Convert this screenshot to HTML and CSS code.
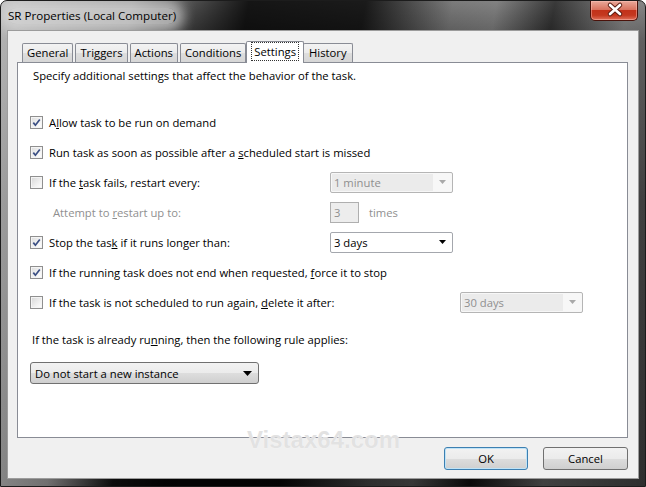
FILE: index.html
```html
<!DOCTYPE html>
<html>
<head>
<meta charset="utf-8">
<title>SR Properties (Local Computer)</title>
<link rel="stylesheet" href="styles.css">
</head>
<body>
<div class="window">
  <div class="titlebar">
    <span class="title">SR Properties (Local Computer)</span>
    <div class="close-btn">
      <svg width="48" height="20" viewBox="0 0 48 20">
        <path d="M19 5 L29 14 M29 5 L19 14" stroke="#5b1c12" stroke-width="4.5" stroke-linecap="round"/>
        <path d="M19 5 L29 14 M29 5 L19 14" stroke="#ffffff" stroke-width="2.6" stroke-linecap="round"/>
      </svg>
    </div>
  </div>
  <div class="client">
    <div class="tabs">
      <div class="tab">General</div>
      <div class="tab">Triggers</div>
      <div class="tab">Actions</div>
      <div class="tab">Conditions</div>
      <div class="tab active"><span class="focus">Settings</span></div>
      <div class="tab last">History</div>
    </div>
    <div class="panel">
      <p class="intro">Specify additional settings that affect the behavior of the task.</p>
      <div class="options">
        <div class="row">
          <label class="opt"><span class="cb checked"><svg width="11" height="11" viewBox="0 0 11 11"><path d="M2.3 5.6 L4.4 8.2 L8.8 2.4" fill="none" stroke="#3b4f84" stroke-width="1.7"/></svg></span><span>A<u>l</u>low task to be run on demand</span></label>
        </div>
        <div class="row">
          <label class="opt"><span class="cb checked"><svg width="11" height="11" viewBox="0 0 11 11"><path d="M2.3 5.6 L4.4 8.2 L8.8 2.4" fill="none" stroke="#3b4f84" stroke-width="1.7"/></svg></span><span>Run task as soon as possible after a <u>s</u>cheduled start is missed</span></label>
        </div>
        <div class="row">
          <label class="opt"><span class="cb"></span><span>If the <u>t</u>ask fails, restart every:</span></label>
          <div class="combo disabled"><span class="combo-text">1 minute</span><span class="combo-arrow"><svg width="7" height="4" viewBox="0 0 7 4"><path d="M0 0 H7 L3.5 4 Z" fill="#a9a9a9"/></svg></span></div>
        </div>
        <div class="row">
          <span class="opt indent gray"><span>Attempt to <u>r</u>estart up to:</span></span>
          <div class="textbox disabled">3</div>
          <span class="times gray">times</span>
        </div>
        <div class="row">
          <label class="opt"><span class="cb checked"><svg width="11" height="11" viewBox="0 0 11 11"><path d="M2.3 5.6 L4.4 8.2 L8.8 2.4" fill="none" stroke="#3b4f84" stroke-width="1.7"/></svg></span><span>Stop the tas<u>k</u> if it runs longer than:</span></label>
          <div class="combo"><span class="combo-text">3 days</span><span class="combo-arrow"><svg width="7" height="4" viewBox="0 0 7 4"><path d="M0 0 H7 L3.5 4 Z" fill="#000"/></svg></span></div>
        </div>
        <div class="row">
          <label class="opt"><span class="cb checked"><svg width="11" height="11" viewBox="0 0 11 11"><path d="M2.3 5.6 L4.4 8.2 L8.8 2.4" fill="none" stroke="#3b4f84" stroke-width="1.7"/></svg></span><span>If the running task does not end when requested, <u>f</u>orce it to stop</span></label>
        </div>
        <div class="row">
          <label class="opt wide"><span class="cb"></span><span>If the task is not scheduled to run again, <u>d</u>elete it after:</span></label>
          <div class="combo disabled"><span class="combo-text">30 days</span><span class="combo-arrow"><svg width="7" height="4" viewBox="0 0 7 4"><path d="M0 0 H7 L3.5 4 Z" fill="#a9a9a9"/></svg></span></div>
        </div>
      </div>
      <p class="rule-label">If the task is already ru<u>n</u>ning, then the following rule applies:</p>
      <div class="dropdown"><span>Do not start a new instance</span><svg width="9" height="5" viewBox="0 0 9 5"><path d="M0 0 H9 L4.5 5 Z" fill="#000"/></svg></div>
    </div>
    <div class="buttons">
      <div class="btn default">OK</div>
      <div class="btn">Cancel</div>
    </div>
    <div class="watermark">Vistax64.com</div>
  </div>
</div>
</body>
</html>
```

FILE: styles.css
```css
* { box-sizing: border-box; }
html, body { margin: 0; padding: 0; background: #ffffff; }
body {
  font-family: "Open Sans", "Noto Sans", sans-serif;
  font-size: 11.25px;
  color: #000;
}
u { text-decoration: underline; text-underline-offset: 1px; }

.window {
  width: 646px;
  height: 487px;
  display: flex;
  flex-direction: column;
  border: 1px solid #1c1c1c;
  border-radius: 7px 7px 0 0;
  overflow: hidden;
  background:
    linear-gradient(100deg, rgba(220,220,220,0.75) 0, rgba(190,190,190,0.55) 18%, rgba(0,0,0,0.3) 27%, rgba(0,0,0,0.8) 34%, rgba(0,0,0,0.75) 50%, rgba(255,255,255,0.12) 62%, rgba(255,255,255,0.16) 68%, rgba(0,0,0,0.45) 76%, rgba(255,255,255,0.2) 86%, rgba(255,255,255,0.12) 100%),
    linear-gradient(to bottom, #6a6a6a 0, #3c3c3c 40px, #1b1b1b 200px, #111 100%);
}

.titlebar {
  height: 29px;
  flex: none;
  display: flex;
  justify-content: space-between;
  align-items: flex-start;
  padding-left: 7px;
}
.title {
  margin-top: 7px;
  font-size: 11.6px;
  line-height: 16px;
  color: #000;
  background: rgba(225,225,225,0.6);
  border-radius: 8px;
  box-shadow: 0 0 12px 8px rgba(225,225,225,0.6);
}
.close-btn {
  width: 48px;
  height: 20px;
  margin-right: 7px;
  border: 1px solid #4a120a;
  border-top: none;
  border-radius: 0 0 5px 5px;
  background: linear-gradient(to bottom, #e9a99a 0, #d9735f 45%, #c2321a 50%, #c4381f 75%, #e0705a 100%);
  box-shadow: inset 0 0 0 1px rgba(255,200,190,0.45);
}
.close-btn svg { display: block; margin-top: -1px; }

.client {
  flex: 1;
  margin: 0 6px 7px 6px;
  background: #f0f0f0;
  border: 1px solid #9c9c9c;
  padding: 10px 10px 8px 9px;
  display: flex;
  flex-direction: column;
  position: relative;
}

.tabs {
  height: 21px;
  flex: none;
  display: flex;
  align-items: flex-end;
  padding-left: 5px;
  position: relative;
  z-index: 1;
}
.tab {
  height: 19px;
  padding: 0 4px;
  margin-right: 2px;
  border: 1px solid #898c95;
  border-bottom: none;
  border-radius: 2px 2px 0 0;
  background: linear-gradient(to bottom, #f3f3f3 0, #ebebeb 50%, #dedede 51%, #d6d6d6 100%);
  line-height: 17px;
  white-space: nowrap;
}
.tab.last { padding: 0 5px; }
.tab.active {
  height: 22px;
  margin: 0 0 -1px -2px;
  padding: 0 5px;
  background: #ffffff;
  line-height: 18px;
  position: relative;
  z-index: 2;
}
.tab.active + .tab { margin-left: -1px; }
.focus {
  display: inline-block;
  outline: 1px dotted #333;
  outline-offset: 0;
  padding: 0 2px;
  line-height: 17px;
  margin-top: 1px;
}

.panel {
  flex: 1;
  background: #ffffff;
  border: 1px solid #898c95;
  padding: 5px 12px 0 12px;
}
.intro {
  margin: 0 0 0 3px;
  line-height: 16px;
}
.options {
  margin-top: 23px;
}
.row {
  height: 30px;
  display: flex;
  align-items: center;
}
.opt {
  width: 300px;
  flex: none;
  display: flex;
  align-items: center;
  gap: 6px;
  white-space: nowrap;
}
.opt.wide { width: 430px; }
.opt.indent { padding-left: 23px; }
.gray { color: #8f8f8f; }

.cb {
  width: 13px;
  height: 13px;
  flex: none;
  border: 1px solid #8f8f8f;
  background: linear-gradient(135deg, #d6d6d6 0, #f0f0f0 60%, #ffffff 100%);
  box-shadow: inset 0 0 0 1px #f4f4f4;
  display: flex;
  align-items: center;
  justify-content: center;
}
.cb.checked { background: linear-gradient(135deg, #dcdcdc 0, #f4f4f4 60%, #ffffff 100%); }
.cb svg { display: block; }

.combo {
  width: 123px;
  height: 21px;
  flex: none;
  border: 1px solid #a4a7ad;
  border-radius: 2px;
  background: #ffffff;
  display: flex;
  align-items: stretch;
}
.combo-text {
  flex: 1;
  padding-left: 3px;
  line-height: 19px;
}
.combo-arrow {
  width: 19px;
  display: flex;
  align-items: center;
  justify-content: center;
}
.combo.disabled {
  border-color: #b5b5b5;
  background: #f7f7f7;
  color: #8f8f8f;
}
.combo.disabled .combo-text {
  background: #ebebeb;
  margin: 1px 0 1px 1px;
  padding-left: 2px;
  line-height: 17px;
}
.textbox {
  width: 29px;
  height: 21px;
  flex: none;
  border: 1px solid #afafaf;
  background: #ededed;
  padding-left: 3px;
  line-height: 19px;
}
.textbox.disabled { color: #8f8f8f; }
.times { margin-left: 10px; }

.rule-label {
  margin: 15px 0 0 2px;
  line-height: 16px;
}
.dropdown {
  margin-top: 14px;
  width: 229px;
  height: 22px;
  border: 1px solid #707070;
  border-radius: 3px;
  background: linear-gradient(to bottom, #f2f2f2 0, #ebebeb 50%, #dddddd 51%, #cfcfcf 100%);
  display: flex;
  align-items: center;
  justify-content: space-between;
  padding: 0 6px 0 4px;
}
.dropdown svg { display: block; }

.buttons {
  flex: none;
  margin-top: 9px;
  height: 23px;
  display: flex;
  justify-content: flex-end;
  gap: 15px;
}
.btn {
  width: 85px;
  height: 23px;
  border: 1px solid #707070;
  border-radius: 3px;
  background: linear-gradient(to bottom, #f2f2f2 0, #ebebeb 50%, #dddddd 51%, #cfcfcf 100%);
  text-align: center;
  line-height: 21px;
}
.btn.default {
  width: 84px;
  border-color: #3c7fb1;
  box-shadow: inset 0 0 0 1px #bfe3f7;
}

.watermark {
  position: absolute;
  left: 239px;
  top: 395px;
  font-family: "Liberation Sans", Arial, sans-serif;
  font-weight: bold;
  font-size: 24px;
  color: #e2e2e2;
  text-shadow: 0 0 1px #fff;
  z-index: 3;
  pointer-events: none;
}
```
